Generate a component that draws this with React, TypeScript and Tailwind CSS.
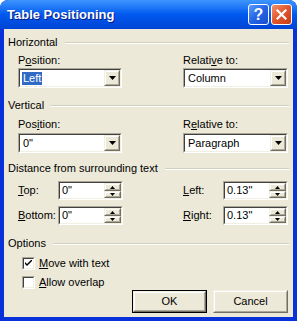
import React from 'react';

const font = { fontFamily: '"Liberation Sans", Arial, sans-serif' };

const U: React.FC<{ children: React.ReactNode }> = ({ children }) => <span className="underline underline-offset-[1px]">{children}</span>;

const Header: React.FC<{ label: string; className?: string }> = ({ label, className }) => (
  <div className={`flex items-center h-[13px] leading-[13px] ${className ?? ''}`}>
    <span>{label}</span>
    <div className="flex-1 ml-[7px] mr-[4px] border-t border-t-[#d0d0bf] border-b border-b-white" />
  </div>
);

const Arrow: React.FC<{ dir: 'up' | 'down'; size?: number }> = ({ dir, size = 7 }) => (
  <svg width={size} height={Math.ceil(size / 2)} viewBox={`0 0 ${size} ${Math.ceil(size / 2)}`}>
    {dir === 'down' ? (
      <polygon points={`0,0 ${size},0 ${size / 2},${Math.ceil(size / 2)}`} fill="#000" />
    ) : (
      <polygon points={`0,${Math.ceil(size / 2)} ${size},${Math.ceil(size / 2)} ${size / 2},0`} fill="#000" />
    )}
  </svg>
);

const Raised: React.FC<{ className?: string; children?: React.ReactNode }> = ({ className, children }) => (
  <div className={`border border-t-[#f1efe2] border-l-[#f1efe2] border-r-[#716f64] border-b-[#716f64] ${className ?? ''}`}>
    <div className="w-full h-full border border-t-white border-l-white border-r-[#aca899] border-b-[#aca899] bg-[#ece9d8] flex items-center justify-center">
      {children}
    </div>
  </div>
);

const Sunken: React.FC<{ className?: string; children?: React.ReactNode }> = ({ className, children }) => (
  <div className={`border border-t-[#aca899] border-l-[#aca899] border-r-white border-b-white ${className ?? ''}`}>
    <div className="w-full h-full border border-t-[#404040] border-l-[#404040] border-r-[#f1efe2] border-b-[#f1efe2] bg-white flex items-center">
      {children}
    </div>
  </div>
);

const Combo: React.FC<{ value: string; selected?: boolean; w: string }> = ({ value, selected, w }) => (
  <Sunken className={`${w} h-[20px]`}>
    <div className="flex-1 pl-[2px] flex items-center">
      <span className={selected ? 'bg-[#316ac5] text-white px-[1px] leading-[13px]' : 'px-[1px] leading-[13px]'}>{value}</span>
    </div>
    <Raised className="w-[16px] h-[16px]">
      <Arrow dir="down" />
    </Raised>
  </Sunken>
);

const Spin: React.FC<{ value: string; w: string }> = ({ value, w }) => (
  <Sunken className={`${w} h-[19px]`}>
    <div className="flex-1 pl-[2px] leading-[13px]">{value}</div>
    <div className="flex flex-col w-[17px] h-full">
      <Raised className="w-full h-[8px]">
        <Arrow dir="up" size={5} />
      </Raised>
      <Raised className="w-full h-[7px]">
        <Arrow dir="down" size={5} />
      </Raised>
    </div>
  </Sunken>
);

const Check: React.FC<{ checked?: boolean; children: React.ReactNode }> = ({ checked, children }) => (
  <div className="flex items-center h-[13px] pl-[14px]">
    <div className="w-[13px] h-[13px] border border-t-[#aca899] border-l-[#aca899] border-r-white border-b-white">
      <div className="w-full h-full border border-t-[#404040] border-l-[#404040] border-r-[#f1efe2] border-b-[#f1efe2] bg-white flex items-center justify-center">
        {checked && (
          <svg width="7" height="7" viewBox="0 0 7 7">
            <path d="M0 2 L0 4 L2 6 L7 1 L7 -1 L2 4 Z" fill="#000" />
          </svg>
        )}
      </div>
    </div>
    <span className="ml-[4px] leading-[13px]">{children}</span>
  </div>
);

const Button: React.FC<{ label: string; def?: boolean }> = ({ label, def }) => (
  <div className={`w-[75px] h-[23px] ${def ? 'border border-black' : ''}`}>
    <Raised className="w-full h-full">
      <span className="leading-[13px]">{label}</span>
    </Raised>
  </div>
);

export default function App() {
  return (
    <div className="w-[297px] h-[321px] bg-[#0831d9] rounded-t-[8px] flex flex-col overflow-hidden text-[11px] text-black" style={font}>
      <div className="h-[29px] shrink-0 rounded-t-[8px] bg-gradient-to-b from-[#3d95ff] via-[#0058ee] to-[#0045d5] flex items-center pl-[7px] pr-[5px]">
        <span className="flex-1 text-white font-bold text-[13px] leading-[16px] [text-shadow:1px_1px_0_#0a1883]">
          Table Positioning
        </span>
        <div className="w-[21px] h-[21px] rounded-[3px] border border-white bg-gradient-to-br from-[#5c9aff] via-[#2463e6] to-[#1a4fd0] flex items-center justify-center text-white font-bold text-[16px] leading-none">
          ?
        </div>
        <div className="w-[21px] h-[21px] ml-[2px] rounded-[3px] border border-white bg-gradient-to-br from-[#f0906a] via-[#e0552b] to-[#c83c12] flex items-center justify-center">
          <svg width="11" height="11" viewBox="0 0 11 11">
            <path d="M1.5 1.5 L9.5 9.5 M9.5 1.5 L1.5 9.5" stroke="#fff" strokeWidth="2.2" strokeLinecap="square" />
          </svg>
        </div>
      </div>

      <div className="flex-1 mx-[4px] mb-[4px] bg-[#ece9d8] pl-[4px] flex flex-col">
        <Header label="Horizontal" className="mt-[7px]" />
        <div className="flex mt-[5px] pl-[10px]">
          <div className="w-[165px]">
            <div className="h-[13px] leading-[13px]">P<U>o</U>sition:</div>
            <div className="mt-[1px]">
              <Combo value="Left" selected w="w-[104px]" />
            </div>
          </div>
          <div>
            <div className="h-[13px] leading-[13px]">Relati<U>v</U>e to:</div>
            <div className="mt-[1px]">
              <Combo value="Column" w="w-[105px]" />
            </div>
          </div>
        </div>

        <Header label="Vertical" className="mt-[11px]" />
        <div className="flex mt-[6px] pl-[10px]">
          <div className="w-[165px]">
            <div className="h-[13px] leading-[13px]">Pos<U>i</U>tion:</div>
            <div className="mt-[2px]">
              <Combo value={'0"'} w="w-[104px]" />
            </div>
          </div>
          <div>
            <div className="h-[13px] leading-[13px]">R<U>e</U>lative to:</div>
            <div className="mt-[2px]">
              <Combo value="Paragraph" w="w-[105px]" />
            </div>
          </div>
        </div>

        <Header label="Distance from surrounding text" className="mt-[9px]" />
        <div className="flex flex-col gap-[6px] mt-[6px] pl-[10px]">
          <div className="flex items-center">
            <div className="w-[40px] leading-[13px]"><U>T</U>op:</div>
            <Spin value={'0"'} w="w-[65px]" />
            <div className="w-[40px] ml-[60px] leading-[13px]"><U>L</U>eft:</div>
            <Spin value={'0.13"'} w="w-[65px]" />
          </div>
          <div className="flex items-center">
            <div className="w-[40px] leading-[13px]"><U>B</U>ottom:</div>
            <Spin value={'0"'} w="w-[65px]" />
            <div className="w-[40px] ml-[60px] leading-[13px]"><U>R</U>ight:</div>
            <Spin value={'0.13"'} w="w-[65px]" />
          </div>
        </div>

        <Header label="Options" className="mt-[12px]" />
        <div className="flex flex-col gap-[6px] mt-[7px]">
          <Check checked>
            <U>M</U>ove with text
          </Check>
          <Check>
            <U>A</U>llow overlap
          </Check>
        </div>
        <div className="flex justify-end gap-[6px] mt-[1px] pr-[5px]">
          <Button label="OK" def />
          <Button label="Cancel" />
        </div>
      </div>
    </div>
  );
}
